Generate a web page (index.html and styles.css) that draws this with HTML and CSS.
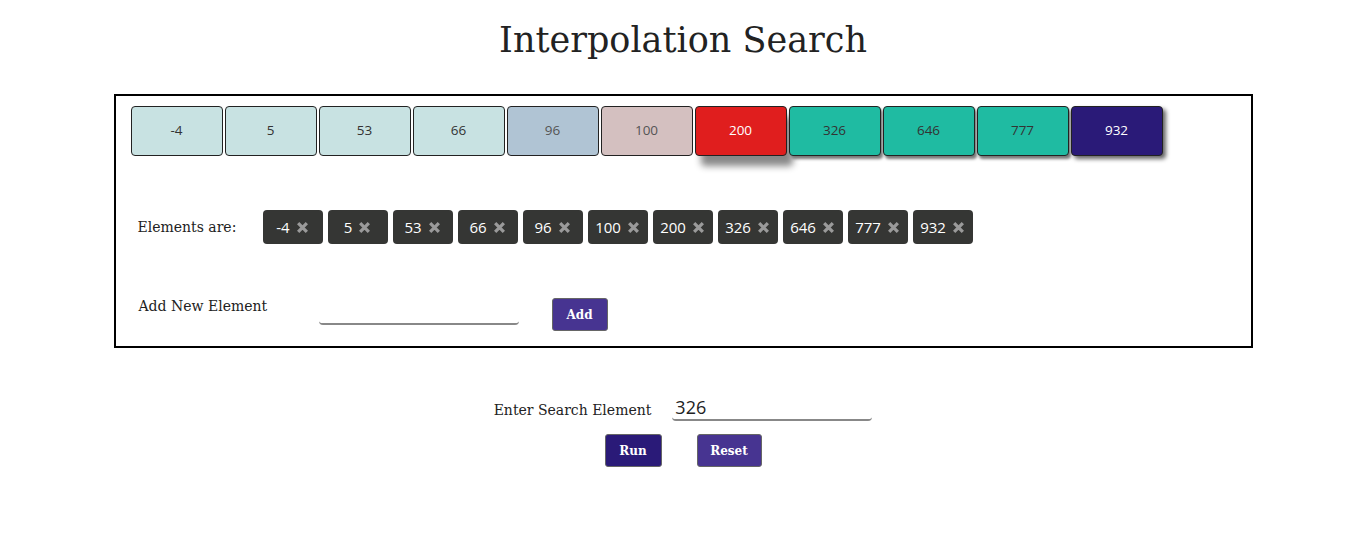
FILE: index.html
```html
<!DOCTYPE html>
<html>
<head>
<meta charset="utf-8">
<link rel="stylesheet" href="styles.css">
</head>
<body>
<h1 class="title">Interpolation Search</h1>
<div class="panel">
  <div class="cells">
    <div class="cell c-light">-4</div>
    <div class="cell c-light">5</div>
    <div class="cell c-light">53</div>
    <div class="cell c-light">66</div>
    <div class="cell c-steel">96</div>
    <div class="cell c-rose">100</div>
    <div class="cell c-red">200</div>
    <div class="cell c-teal">326</div>
    <div class="cell c-teal">646</div>
    <div class="cell c-teal">777</div>
    <div class="cell c-navy">932</div>
  </div>
  <div class="elements">
    <span class="label el-label">Elements are:</span>
    <div class="chips">
      <span class="chip">-4<svg class="x" viewBox="0 0 12 12"><path d="M2 2L10 10M10 2L2 10"/></svg></span>
      <span class="chip">5<svg class="x" viewBox="0 0 12 12"><path d="M2 2L10 10M10 2L2 10"/></svg></span>
      <span class="chip">53<svg class="x" viewBox="0 0 12 12"><path d="M2 2L10 10M10 2L2 10"/></svg></span>
      <span class="chip">66<svg class="x" viewBox="0 0 12 12"><path d="M2 2L10 10M10 2L2 10"/></svg></span>
      <span class="chip">96<svg class="x" viewBox="0 0 12 12"><path d="M2 2L10 10M10 2L2 10"/></svg></span>
      <span class="chip">100<svg class="x" viewBox="0 0 12 12"><path d="M2 2L10 10M10 2L2 10"/></svg></span>
      <span class="chip">200<svg class="x" viewBox="0 0 12 12"><path d="M2 2L10 10M10 2L2 10"/></svg></span>
      <span class="chip">326<svg class="x" viewBox="0 0 12 12"><path d="M2 2L10 10M10 2L2 10"/></svg></span>
      <span class="chip">646<svg class="x" viewBox="0 0 12 12"><path d="M2 2L10 10M10 2L2 10"/></svg></span>
      <span class="chip">777<svg class="x" viewBox="0 0 12 12"><path d="M2 2L10 10M10 2L2 10"/></svg></span>
      <span class="chip">932<svg class="x" viewBox="0 0 12 12"><path d="M2 2L10 10M10 2L2 10"/></svg></span>
    </div>
  </div>
  <div class="add-row">
    <span class="label add-label">Add New Element</span>
    <input class="line-input add-input" type="text">
    <button class="btn btn-light add-btn">Add</button>
  </div>
</div>
<div class="search">
  <div class="search-row">
    <span class="label search-label">Enter Search Element</span>
    <input class="line-input search-input" type="text" value="326">
  </div>
  <div class="search-btns">
    <button class="btn btn-dark run-btn">Run</button>
    <button class="btn btn-light reset-btn">Reset</button>
  </div>
</div>
</body>
</html>
```
FILE: styles.css
```css
body {
  margin: 0;
  background: #fff;
  font-family: "DejaVu Serif", Georgia, serif;
  color: #222;
}
.title {
  margin: 18px 0 0;
  text-align: center;
  font-weight: normal;
  font-size: 35px;
  line-height: 44px;
  color: #222;
}
.panel {
  width: 1105px;
  margin: 32px auto 0;
  border: 2px solid #000;
  padding: 10px 15px 15px;
}
.cells {
  display: flex;
  gap: 2px;
}
.cell {
  width: 90px;
  height: 45px;
  padding-bottom: 3px;
  box-sizing: content-box;
  border: 1px solid #222;
  border-radius: 4px;
  display: flex;
  align-items: center;
  justify-content: center;
  font-family: "Open Sans", "Noto Sans", sans-serif;
  font-size: 13.5px;
  color: #333;
}
.c-light { background: #c8e2e2; }
.c-steel { background: #b0c4d4; color: #555; }
.c-rose { background: #d4c0c0; color: #555; }
.c-red { background: #e01e1e; color: #fff; box-shadow: 6px 10px 7px #888; }
.c-teal { background: #1fbba2; box-shadow: 2px 3px 3px #777; }
.c-navy { background: #2a1a78; color: #fff; box-shadow: 3px 3px 4px #666; }
.label {
  font-size: 14px;
  color: #222;
}
.elements {
  display: flex;
  align-items: center;
  margin-top: 54px;
}
.el-label {
  width: 132px;
  padding-left: 7px;
  box-sizing: border-box;
  flex: none;
}
.chips {
  display: flex;
  gap: 5px;
}
.chip {
  width: 60px;
  height: 34px;
  box-sizing: border-box;
  background: #353634;
  border-radius: 4px;
  color: #fff;
  font-family: "Open Sans", "Noto Sans", sans-serif;
  font-size: 15px;
  display: flex;
  align-items: center;
  justify-content: center;
  gap: 6px;
}
.x {
  width: 13px;
  height: 13px;
  stroke: #9a9a9a;
  stroke-width: 3;
  fill: none;
}
.add-row {
  display: flex;
  align-items: flex-start;
  margin-top: 54px;
}
.add-label {
  width: 188px;
  padding-left: 8px;
  box-sizing: border-box;
  flex: none;
}
.line-input {
  border: none;
  border-bottom: 2px solid #888;
  border-radius: 0 0 4px 4px;
  outline: none;
  background: transparent;
  padding: 0 3px;
  font-family: "Open Sans", "Noto Sans", sans-serif;
  color: #222;
}
.add-input {
  width: 200px;
  height: 27px;
  box-sizing: border-box;
}
.add-btn {
  margin-left: 33px;
  width: 56px;
}
.btn {
  height: 33px;
  padding: 0;
  border: 1px solid #666;
  border-radius: 3px;
  color: #fff;
  font-family: "DejaVu Serif", Georgia, serif;
  font-weight: bold;
  font-size: 12px;
}
.btn-light { background: #473491; }
.btn-dark { background: #2a1a78; }
.search {
  margin-top: 47px;
  display: flex;
  flex-direction: column;
  align-items: center;
}
.search-row {
  display: flex;
  align-items: flex-end;
  gap: 21px;
}
.search-label {
  padding-bottom: 3px;
}
.search-input {
  width: 200px;
  height: 26px;
  box-sizing: border-box;
  font-size: 18px;
}
.search-btns {
  display: flex;
  gap: 35px;
  margin-top: 13px;
}
.run-btn { width: 57px; }
.reset-btn { width: 65px; }
```
